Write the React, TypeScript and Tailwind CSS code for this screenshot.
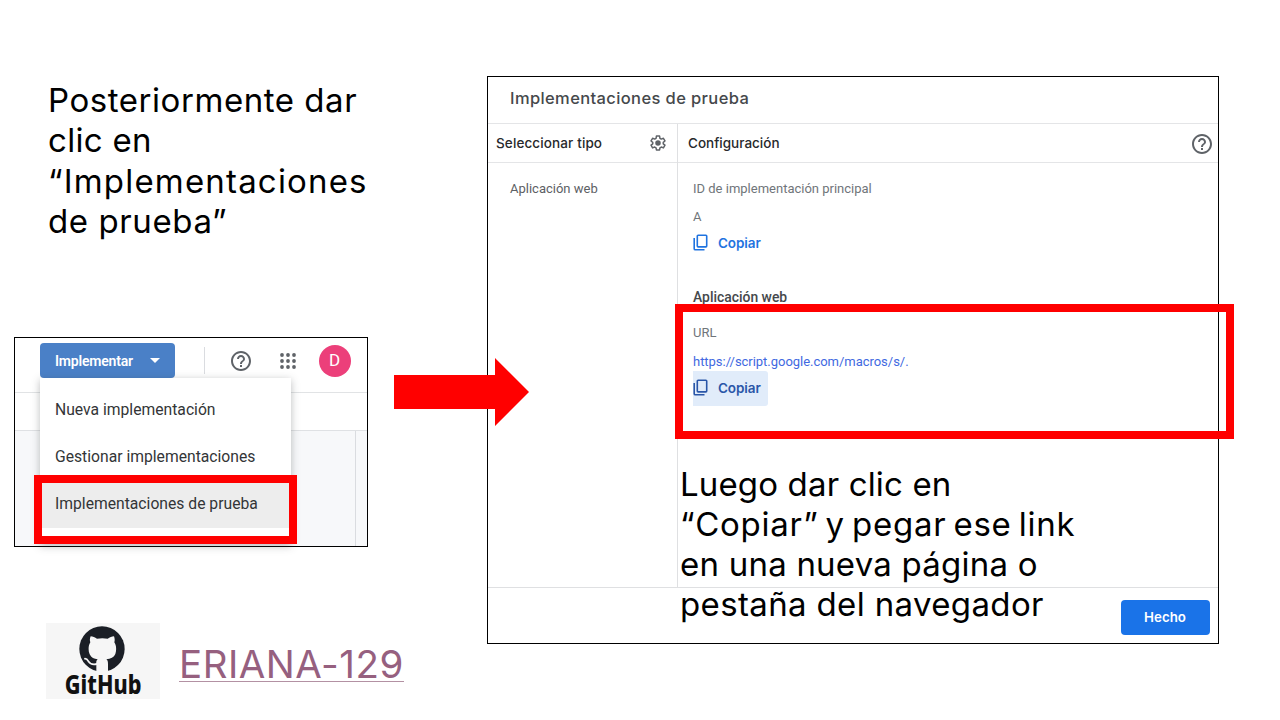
import type { ReactNode } from "react";
import { MdHelpOutline } from "react-icons/md";

const DOTS = [2, 8, 14];

function AppsGrid() {
  return (
    <svg className="size-4" viewBox="0 0 16 16" fill="#5f6368">
      {DOTS.map((y) => DOTS.map((x) => <circle key={`${x}-${y}`} cx={x} cy={y} r="1.9" />))}
    </svg>
  );
}

function Octocat() {
  return (
    <svg className="h-[46px] w-[46px] -translate-x-[1px]" viewBox="127 34 138 138">
      <circle cx="196" cy="103" r="68" fill="#1b1f26" />
      <path
        fill="#f6f6f6"
        d="M162 65C159 72 159 77 161 83C155 92 154 108 159 119C164 129 172 133 183 134C179 138 178 142 179 150V173H214V148C214 141 213 137 209 134C222 133 232 128 236 118C240 106 239 92 233 83C235 76 234 70 232 65C226 65 219 68 213 72Q197 69 181 72C175 68 168 65 162 65z"
      />
      <path fill="none" stroke="#f6f6f6" strokeWidth="5.5" strokeLinecap="round" d="M145 132C151 132 153 136 156 141C161 150 171 150 181 148" />
    </svg>
  );
}

function Gear() {
  return (
    <svg className="size-[18px]" viewBox="0 0 24 24" fill="none" stroke="#5f6368" strokeWidth="2" strokeLinejoin="round">
      <path d="M9.9 2.8h4.2l.5 2.9 1.8 1.1 2.8-1.1 2.1 3.6-2.3 1.8v2l2.3 1.8-2.1 3.6-2.8-1.1-1.8 1.1-.5 2.7H9.9l-.5-2.7-1.8-1.1-2.8 1.1-2.1-3.6L5 13.1v-2L2.7 9.3l2.1-3.6 2.8 1.1 1.8-1.1z" />
      <circle cx="12" cy="12" r="3.7" fill="#5f6368" stroke="none" />
    </svg>
  );
}

function CopyIcon() {
  return (
    <svg className="h-[17px] w-[15px] shrink-0" viewBox="0 0 15 17" fill="none" stroke="currentColor" strokeWidth="1.6">
      <rect x="4.3" y="1.3" width="9.4" height="11.6" rx="0.8" />
      <path d="M1.2 4v10.7q0 1.1 1.1 1.1H11.5" />
    </svg>
  );
}

function DeployMenuShot() {
  return (
    <section className="relative ml-[14px] flex h-[210px] w-[354px] flex-col border border-black bg-white font-[Roboto,sans-serif]">
      <div className="flex h-[55px] shrink-0 items-start border-b border-[#e1e3e5]">
        <button className="mt-[5px] ml-[25px] flex h-[35px] w-[135px] items-center rounded bg-[#4a80c7] pl-[15px] text-[14px] font-semibold tracking-[-0.2px] text-white">
          <span className="w-[78px] pt-px text-left whitespace-nowrap">Implementar</span>
          <svg className="ml-[17px] h-[5px] w-[10px]" viewBox="0 0 10 5" fill="#fff">
            <path d="M0 0h10L5 5z" />
          </svg>
        </button>
        <div className="mt-[9px] ml-[29px] h-[27px] w-px bg-[#dadce0]" />
        <MdHelpOutline className="mt-[11px] ml-[24px] size-6 text-[#5f6368]" />
        <div className="mt-[15px] ml-[27px]">
          <AppsGrid />
        </div>
        <div className="mt-[7px] ml-[22.5px] flex size-[32px] items-center justify-center rounded-full bg-[#ec3f7a] text-[17px] text-white">
          D
        </div>
      </div>
      <div className="h-[38px] shrink-0 border-b border-[#dfe1e4]" />
      <div className="flex flex-1 bg-[#f7f8fa]">
        <div className="w-[341px] border-r border-[#dadce0]" />
      </div>

      <div className="absolute top-[40px] left-[25px] flex h-[166px] w-[251px] flex-col bg-white pt-[8px] text-[15.7px] text-[#333537] shadow-[0_2px_8px_rgba(60,64,67,0.35)]">
        <div className="flex h-[47px] items-center pl-[15px]">Nueva implementación</div>
        <div className="flex h-[47px] items-center pl-[15px]">Gestionar implementaciones</div>
        <div className="flex h-[48px] items-center bg-[#ededed] pl-[15px]">Implementaciones de prueba</div>
      </div>
      <div className="absolute top-[137px] left-[19px] h-[69px] w-[263px] border-8 border-[#ff0000]" />
    </section>
  );
}

function CopyButton({ active }: { active?: boolean }) {
  return (
    <button
      className={
        active
          ? "flex h-[35px] w-[75px] items-center rounded-r-[3px] bg-[#e1ecfa] pb-[2px] text-[#2a56a8]"
          : "flex h-[35px] w-[75px] items-center pb-[2px] text-[#1f73e0]"
      }
    >
      <CopyIcon />
      <span className="ml-[10px] text-[13.5px] font-semibold tracking-[-0.1px]">Copiar</span>
    </button>
  );
}

function Line({ className, children }: { className: string; children: ReactNode }) {
  return <span className={`whitespace-nowrap ${className}`}>{children}</span>;
}

function TestDeployDialog() {
  return (
    <section className="relative mt-[76px] flex h-[568px] w-[732px] flex-col border border-black bg-white">
      <header className="flex h-[47px] shrink-0 items-center border-b border-[#e4e5e7] pb-[3px] pl-[22px] text-[16.5px] font-medium tracking-[0.38px] text-[#45484b]">
        Implementaciones de prueba
      </header>
      <div className="flex flex-1">
        <div className="flex w-[190px] flex-col border-r border-[#dfe0e2]">
          <div className="flex h-[39px] items-center justify-between border-b border-[#e4e5e7] pr-[10px] pl-[8px] text-[13.5px] font-medium tracking-[0.12px] text-[#27292c]">
            Seleccionar tipo
            <Gear />
          </div>
          <div className="mt-[17px] pl-[22px] font-[Roboto,sans-serif] text-[13px] leading-[18px] text-[#5c6064]">
            Aplicación web
          </div>
        </div>
        <div className="flex flex-1 flex-col">
          <div className="flex h-[39px] items-center justify-between border-b border-[#e4e5e7] pt-px pr-[4px] pl-[10px] text-[13.5px] font-medium text-[#27292c]">
            <span className="pb-px">Configuración</span>
            <MdHelpOutline className="size-[24px] text-[#5f6368]" />
          </div>
          <div className="flex flex-col pl-[15px] font-[Roboto,sans-serif] text-[13px] leading-[18px] text-[#70757a]">
            <span className="mt-[17px]">ID de implementación principal</span>
            <span className="mt-[10px]">A</span>
            <div className="font-['Inter',sans-serif]">
              <CopyButton />
            </div>
            <span className="mt-[27px] text-[13.9px] font-medium text-[#45484b]">Aplicación web</span>
            <span className="mt-[18px]">URL</span>
            <span className="mt-[11px] tracking-[-0.03px] text-[#4169e1]">https://script.google.com/macros/s/.</span>
            <div className="font-['Inter',sans-serif]">
              <CopyButton active />
            </div>
          </div>
        </div>
      </div>
      <footer className="flex h-[56px] shrink-0 items-start justify-end border-t border-[#dfe0e2] pt-[12px] pr-[8.5px]">
        <button className="flex h-[35px] w-[89px] items-center justify-center rounded bg-[#1a73e8] text-[13.3px] font-semibold text-white">
          Hecho
        </button>
      </footer>

      <div className="absolute top-[227px] left-[187px] h-[135px] w-[559px] border-8 border-[#ff0000]" />
      <p className="absolute top-[386.500px] left-[192px] flex flex-col text-[33px] leading-[40.3px]">
        <Line className="tracking-[0.15px]">Luego dar clic en</Line>
        <Line className="tracking-[0.72px] [word-spacing:-2.8px]">“Copiar” y pegar ese link</Line>
        <Line className="tracking-[0.22px]">en una nueva página o</Line>
        <Line className="tracking-[0.36px]">pestaña del navegador</Line>
      </p>
    </section>
  );
}

export default function App() {
  return (
    <main className="relative flex h-[720px] w-[1280px] overflow-hidden bg-white font-['Inter',sans-serif] text-black">
      <div className="flex w-[487px] shrink-0 flex-col">
        <h1 className="mt-[80px] ml-[48px] flex h-[257px] flex-col text-[33px] leading-[40.3px]">
          <Line className="tracking-[0.55px]">Posteriormente dar</Line>
          <Line className="tracking-[0.3px]">clic en</Line>
          <Line className="tracking-[1.18px]">“Implementaciones</Line>
          <Line className="tracking-[0.6px]">de prueba”</Line>
        </h1>
        <DeployMenuShot />
        <div className="mt-[76px] ml-[46px] flex">
          <div className="flex h-[76px] w-[114px] flex-col items-center bg-[#f6f6f6] pt-[3px]">
            <Octocat />
            <span className="h-[26px] scale-x-[0.83] text-[26px] leading-[24px] font-extrabold font-['Noto_Sans',sans-serif] text-[#111111]">
              GitHub
            </span>
          </div>
          <a className="mt-[18px] ml-[19px] h-[41px] border-b border-[#b391a3] text-[38.5px] leading-[46px] tracking-[0.5px] text-[#96607f]">
            ERIANA-129
          </a>
        </div>
      </div>
      <TestDeployDialog />
      <svg className="absolute top-[358px] left-[394px] h-[68px] w-[135px]" viewBox="0 0 135 68" fill="#ff0000">
        <path d="M0 17h101V0l34 34-34 34V51H0z" />
      </svg>
    </main>
  );
}
